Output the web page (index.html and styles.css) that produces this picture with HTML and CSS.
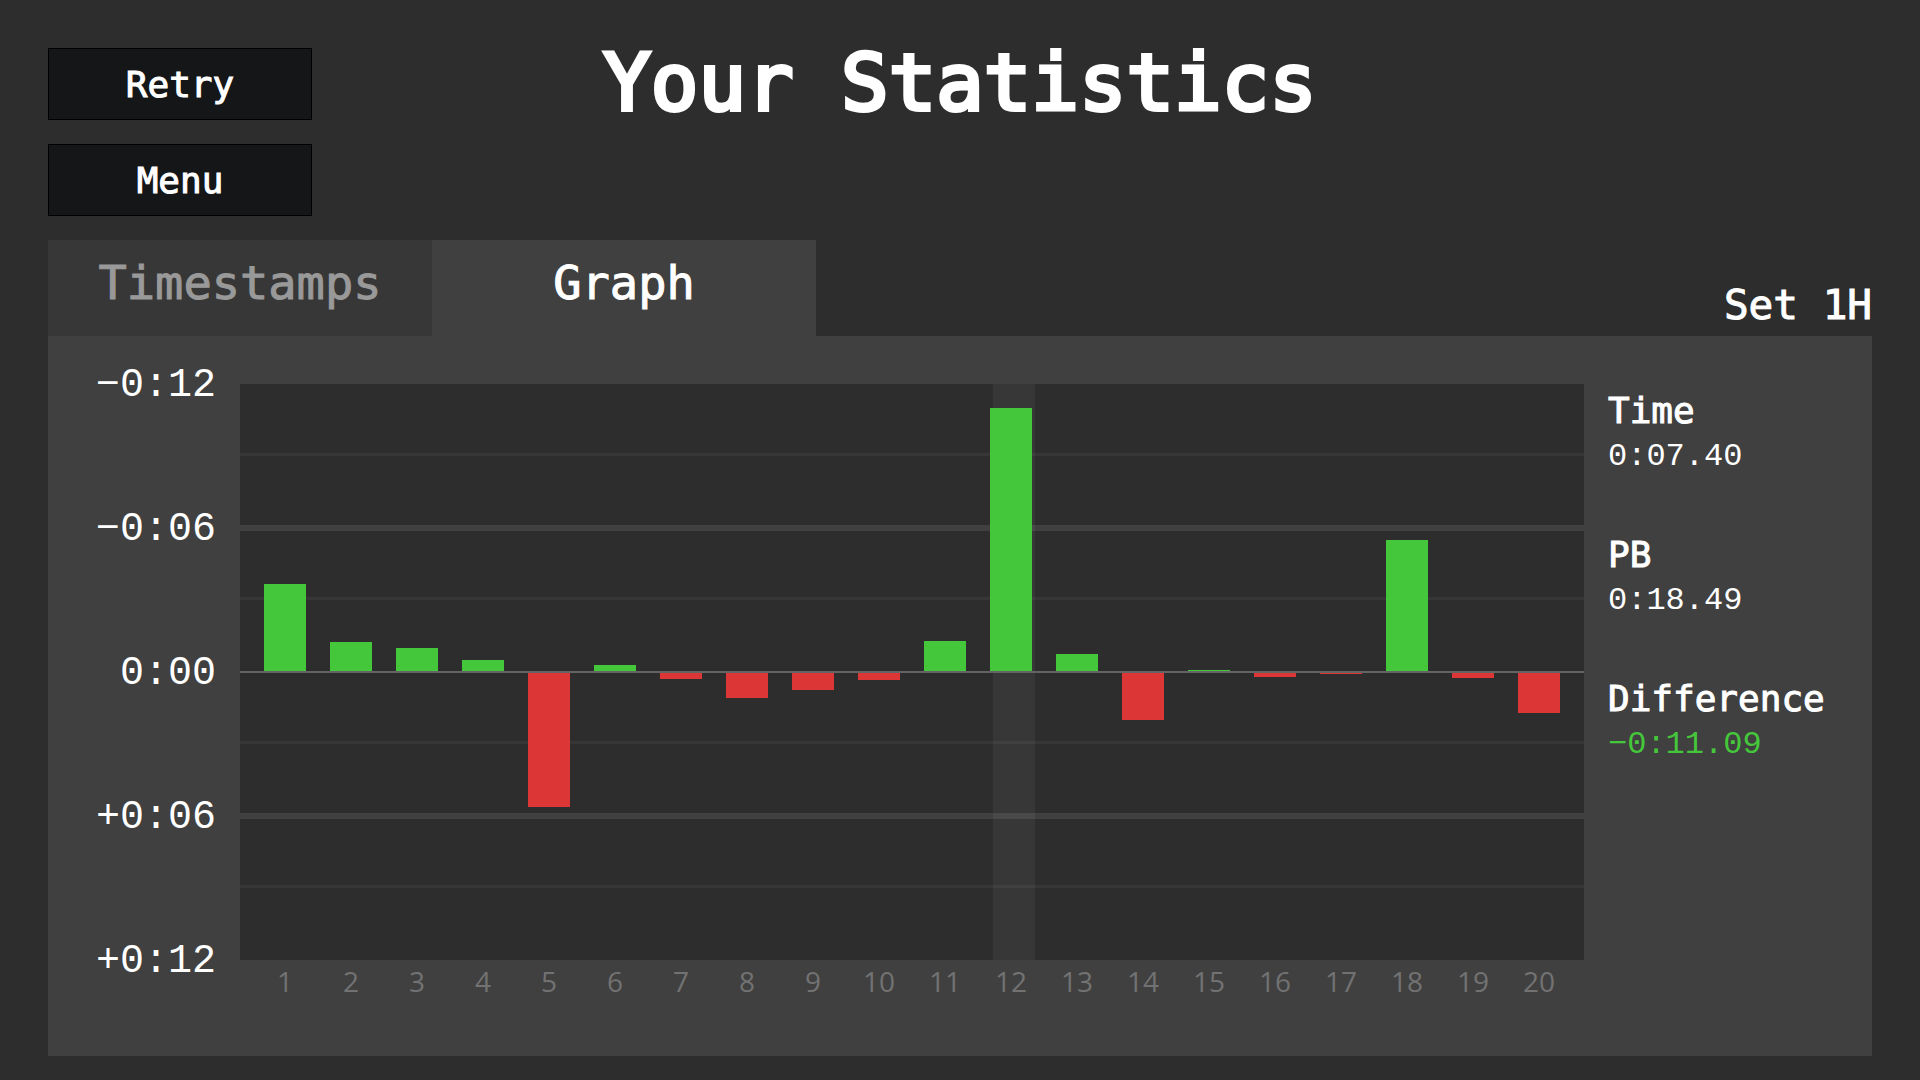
FILE: index.html
```html
<!DOCTYPE html>
<html lang="en">
  <head>
    <meta charset="UTF-8" />
    <meta name="viewport" content="width=device-width, initial-scale=1.0" />
    <title>Your Statistics</title>
    <link rel="stylesheet" href="styles.css">
  </head>
  <body>
    <header class="header">
      <nav class="menu">
        <button class="menu-button" type="button">Retry</button>
        <button class="menu-button" type="button">Menu</button>
      </nav>
      <h1 class="title">Your Statistics</h1>
    </header>
    <div class="tab-row">
      <div class="tabs" role="tablist">
        <button class="tab" type="button" role="tab" aria-selected="false">Timestamps</button>
        <button class="tab active" type="button" role="tab" aria-selected="true">Graph</button>
      </div>
      <h2 class="set-name">Set 1H</h2>
    </div>
    <main class="panel">
      <div class="y-axis">
        <span>−0:12</span>
        <span>−0:06</span>
        <span>0:00</span>
        <span>+0:06</span>
        <span>+0:12</span>
      </div>
      <!-- --t is the difference in seconds, the axis ends at 12 -->
      <div class="plot">
        <div class="grid">
          <div></div>
          <div></div>
          <div></div>
          <div></div>
        </div>
        <div class="bars">
          <div class="col"><div class="bar faster" style="--t: 3.66"></div></div>
          <div class="col"><div class="bar faster" style="--t: 1.25"></div></div>
          <div class="col"><div class="bar faster" style="--t: 1"></div></div>
          <div class="col"><div class="bar faster" style="--t: 0.5"></div></div>
          <div class="col"><div class="bar slower" style="--t: 5.63"></div></div>
          <div class="col"><div class="bar faster" style="--t: 0.29"></div></div>
          <div class="col"><div class="bar slower" style="--t: 0.29"></div></div>
          <div class="col"><div class="bar slower" style="--t: 1.08"></div></div>
          <div class="col"><div class="bar slower" style="--t: 0.75"></div></div>
          <div class="col"><div class="bar slower" style="--t: 0.33"></div></div>
          <div class="col"><div class="bar faster" style="--t: 1.29"></div></div>
          <div class="col selected"><div class="bar faster" style="--t: 11"></div></div>
          <div class="col"><div class="bar faster" style="--t: 0.75"></div></div>
          <div class="col"><div class="bar slower" style="--t: 2"></div></div>
          <div class="col"><div class="bar faster" style="--t: 0.08"></div></div>
          <div class="col"><div class="bar slower" style="--t: 0.21"></div></div>
          <div class="col"><div class="bar slower" style="--t: 0.08"></div></div>
          <div class="col"><div class="bar faster" style="--t: 5.5"></div></div>
          <div class="col"><div class="bar slower" style="--t: 0.25"></div></div>
          <div class="col"><div class="bar slower" style="--t: 1.71"></div></div>
        </div>
        <div class="zero-line"></div>
      </div>
      <div class="x-axis">
        <span>1</span>
        <span>2</span>
        <span>3</span>
        <span>4</span>
        <span>5</span>
        <span>6</span>
        <span>7</span>
        <span>8</span>
        <span>9</span>
        <span>10</span>
        <span>11</span>
        <span>12</span>
        <span>13</span>
        <span>14</span>
        <span>15</span>
        <span>16</span>
        <span>17</span>
        <span>18</span>
        <span>19</span>
        <span>20</span>
      </div>
      <dl class="details">
        <div class="detail">
          <dt>Time</dt>
          <dd>0:07.40</dd>
        </div>
        <div class="detail">
          <dt>PB</dt>
          <dd>0:18.49</dd>
        </div>
        <div class="detail">
          <dt>Difference</dt>
          <dd class="gain">−0:11.09</dd>
        </div>
      </dl>
    </main>
  </body>
</html>
```
FILE: styles.css
```css
* {
  box-sizing: border-box;
}

body {
  display: flex;
  flex-direction: column;
  min-height: 100vh;
  margin: 0;
  padding: 24px 48px;
  background-color: #2d2d2d;
  color: #ffffff;
  font-family: "DejaVu Sans Mono", monospace;
  -webkit-text-stroke: 1px;
}

h1,
h2,
dl,
dd {
  margin: 0;
  font-weight: normal;
}

button {
  border: none;
  color: inherit;
  font-family: inherit;
  -webkit-text-stroke: inherit;
  cursor: pointer;
}

.header {
  display: grid;
  grid-template-columns: 264px 1fr 264px;
  align-items: start;
}

.menu {
  display: flex;
  flex-direction: column;
  gap: 24px;
  padding: 24px 0;
}

.menu-button {
  height: 72px;
  padding: 0;
  border: 1px solid #000000;
  background-color: #141617;
  font-size: 36px;
}

.title {
  font-size: 79px;
  line-height: 118px;
  text-align: center;
  white-space: nowrap;
  -webkit-text-stroke: 4px;
}

.tab-row {
  display: flex;
  justify-content: space-between;
  align-items: flex-end;
}

.tabs {
  display: flex;
}

.tab {
  width: 384px;
  height: 96px;
  padding: 0 0 12px;
  background-color: #373737;
  color: #999999;
  font-size: 47px;
}

.tab.active {
  background-color: #404040;
  color: #ffffff;
}

.set-name {
  font-size: 41px;
  line-height: 62px;
}

.panel {
  display: grid;
  flex: 1;
  grid-template-columns: 192px 1fr 288px;
  grid-template-rows: minmax(432px, 1fr) 96px;
  padding-top: 48px;
  background-color: #404040;
}

.y-axis {
  display: flex;
  flex-direction: column;
  justify-content: space-between;
  margin: -22px 0 -26px;
  padding-right: 24px;
  font-family: "Liberation Mono", monospace;
  font-size: 40px;
  line-height: 48px;
  text-align: right;
  -webkit-text-stroke: 0;
}

.plot {
  position: relative;
  background-color: #2d2d2d;
}

.grid {
  position: absolute;
  inset: 0;
  display: grid;
  grid-template-rows: repeat(4, 1fr);
}

/* thin line just above the middle of each row */
.grid div {
  display: grid;
  grid-template-rows: 1fr 1fr;
}

.grid div::before {
  content: "";
  border-bottom: 3px solid #363636;
}

/* thick line where two rows meet */
.grid div:nth-child(odd) {
  box-shadow: 0 3px #404040, inset 0 -3px #404040;
}

.bars {
  position: absolute;
  inset: 0;
  display: flex;
  justify-content: space-between;
  padding: 0 24px;
}

.col {
  position: relative;
  display: grid;
  grid-template-rows: 1fr 1fr;
  width: 42px;
}

.selected::before {
  content: "";
  position: absolute;
  top: 0;
  bottom: 0;
  left: 3px;
  width: 42px;
  background-color: rgba(255, 255, 255, 0.05);
}

.bar {
  position: relative;
  height: calc(var(--t) / 12 * 100%);
}

.faster {
  grid-row: 1;
  align-self: end;
  background-color: #45c73b;
}

.slower {
  grid-row: 2;
  background-color: #dd3636;
}

.zero-line {
  position: absolute;
  top: 50%;
  left: 0;
  right: 0;
  height: 2px;
  margin-top: -1px;
  background-color: #646464;
}

.x-axis {
  grid-column: 2;
  display: flex;
  justify-content: space-between;
  padding: 0 24px;
  color: #727272;
  font-family: "Open Sans", sans-serif;
  font-size: 28px;
  line-height: 42px;
  -webkit-text-stroke: 0;
}

.x-axis span {
  width: 42px;
  text-align: center;
}

.details {
  grid-column: 3;
  grid-row: 1;
  padding: 3px 0 0 24px;
}

.detail {
  height: 144px;
}

.detail dt {
  font-size: 36px;
  line-height: 48px;
}

.detail dd {
  font-family: "Liberation Mono", monospace;
  font-size: 32px;
  line-height: 44px;
  -webkit-text-stroke: 0;
}

.detail .gain {
  color: #45c73b;
}
```
